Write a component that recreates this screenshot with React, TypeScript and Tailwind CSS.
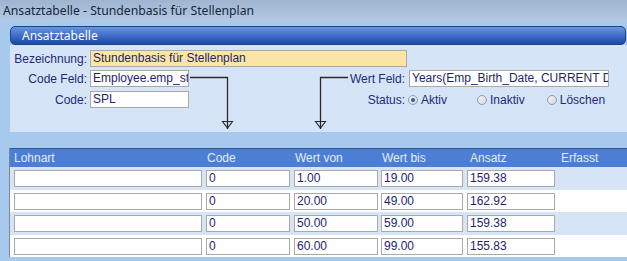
import React from "react";

const font = { fontFamily: '"Liberation Sans", Arial, sans-serif' };

function Input({ w, value, yellow }: { w: string; value: string; yellow?: boolean }) {
  return (
    <div
      className={`${w} h-[17px] border border-[#a9a9a9] ${yellow ? "bg-[#fbe6a6]" : "bg-white"} pl-[2px] text-[12px] leading-[15px] text-[#1e1e70] overflow-hidden whitespace-nowrap`}
    >
      {value}
    </div>
  );
}

function Radio({ checked, label }: { checked?: boolean; label: string }) {
  return (
    <div className="flex items-center gap-[3px]">
      <div className="w-[10px] h-[10px] rounded-full border border-[#8d9cb0] bg-gradient-to-br from-[#f4f6f9] to-[#cfd6df] flex items-center justify-center">
        {checked && <div className="w-[4px] h-[4px] rounded-full bg-[#2f5f9c]" />}
      </div>
      <span className="text-[12px] text-[#1f2a78]">{label}</span>
    </div>
  );
}

const rows = [
  ["0", "1.00", "19.00", "159.38"],
  ["0", "20.00", "49.00", "162.92"],
  ["0", "50.00", "59.00", "159.38"],
  ["0", "60.00", "99.00", "155.83"],
];

export default function App() {
  return (
    <div className="w-[627px] h-[261px] bg-[#a8c9ee] overflow-hidden" style={font}>
      <div className="h-[22px] bg-gradient-to-b from-[#9fb5cf] to-[#b4cbe5] flex items-center pl-[3px]">
        <span className="text-[12.2px] text-[#17263c]" style={{ fontFamily: '"Noto Sans", sans-serif' }}>
          Ansatztabelle - Stundenbasis für Stellenplan
        </span>
      </div>
      <div className="ml-[10px] mr-[1px] mt-[4px] h-[19px] rounded-[5px] border border-[#1d438f] bg-gradient-to-b from-[#6a94dc] via-[#3f6fc9] to-[#1d4aa2] flex items-center pl-[11px]">
        <span className="text-[12px] text-white" style={{ fontFamily: '"Noto Sans", sans-serif' }}>
          Ansatztabelle
        </span>
      </div>
      <div className="relative ml-[10px] h-[87px] bg-[#d5e4f6] pt-[5px]">
        <div className="flex items-center h-[17px]">
          <div className="w-[77px] text-right text-[12px] text-[#1f2a78]">Bezeichnung:</div>
          <div className="ml-[3px]">
            <Input w="w-[317px]" value="Stundenbasis für Stellenplan" yellow />
          </div>
        </div>
        <div className="flex items-center h-[17px] mt-[3px]">
          <div className="w-[77px] text-right text-[12px] text-[#1f2a78]">Code Feld:</div>
          <div className="ml-[3px]">
            <Input w="w-[99px]" value="Employee.emp_st" />
          </div>
          <div className="w-[216px] text-right text-[12px] text-[#1f2a78]">Wert Feld:</div>
          <div className="ml-[4px]">
            <Input w="w-[200px]" value="Years(Emp_Birth_Date, CURRENT DATE)" />
          </div>
        </div>
        <div className="flex items-center h-[17px] mt-[4px]">
          <div className="w-[77px] text-right text-[12px] text-[#1f2a78]">Code:</div>
          <div className="ml-[3px]">
            <Input w="w-[99px]" value="SPL" />
          </div>
          <div className="w-[216px] text-right text-[12px] text-[#1f2a78]">Status:</div>
          <div className="ml-[3px] flex items-center">
            <Radio checked label="Aktiv" />
            <div className="ml-[30px]">
              <Radio label="Inaktiv" />
            </div>
            <div className="ml-[22px]">
              <Radio label="Löschen" />
            </div>
          </div>
        </div>
        <svg className="absolute left-0 top-0" width="400" height="87" viewBox="0 0 400 87">
          <path d="M180 32.5 H217.5 V84" fill="none" stroke="#2b2b2b" strokeWidth="1.3" />
          <path d="M212.5 76.5 H222.5 L217.5 83 Z" fill="none" stroke="#2b2b2b" strokeWidth="1.1" />
          <path d="M338 32.5 H310.5 V84" fill="none" stroke="#2b2b2b" strokeWidth="1.3" />
          <path d="M305.5 76.5 H315.5 L310.5 83 Z" fill="none" stroke="#2b2b2b" strokeWidth="1.1" />
        </svg>
      </div>
      <div className="ml-[9px] mt-[16px] border-l border-[#7c8798]">
        <div className="grid grid-cols-[193px_88px_87px_86px_93px_1fr] h-[19px] bg-[#4c7fd3] border-t border-[#33568e] text-[12px] text-[#e4ecfb] items-center">
          <div className="pl-[4px]">Lohnart</div>
          <div className="pl-[4px]">Code</div>
          <div className="pl-[4px]">Wert von</div>
          <div className="pl-[4px]">Wert bis</div>
          <div className="pl-[6px]">Ansatz</div>
          <div className="pl-[4px]">Erfasst</div>
        </div>
        {rows.map((r, i) => (
          <div
            key={i}
            className={`grid grid-cols-[193px_88px_87px_86px_93px_1fr] items-center ${i % 2 === 0 ? "h-[23px] bg-[#d6e4f5]" : "h-[22px] bg-white"}`}
          >
            <div className="pl-[4px]">
              <Input w="w-[188px]" value="" />
            </div>
            <div className="pl-[3px]">
              <Input w="w-[84px]" value={r[0]} />
            </div>
            <div className="pl-[3px]">
              <Input w="w-[84px]" value={r[1]} />
            </div>
            <div className="pl-[3px]">
              <Input w="w-[82px]" value={r[2]} />
            </div>
            <div className="pl-[3px]">
              <Input w="w-[88px]" value={r[3]} />
            </div>
            <div />
          </div>
        ))}
      </div>
    </div>
  );
}
